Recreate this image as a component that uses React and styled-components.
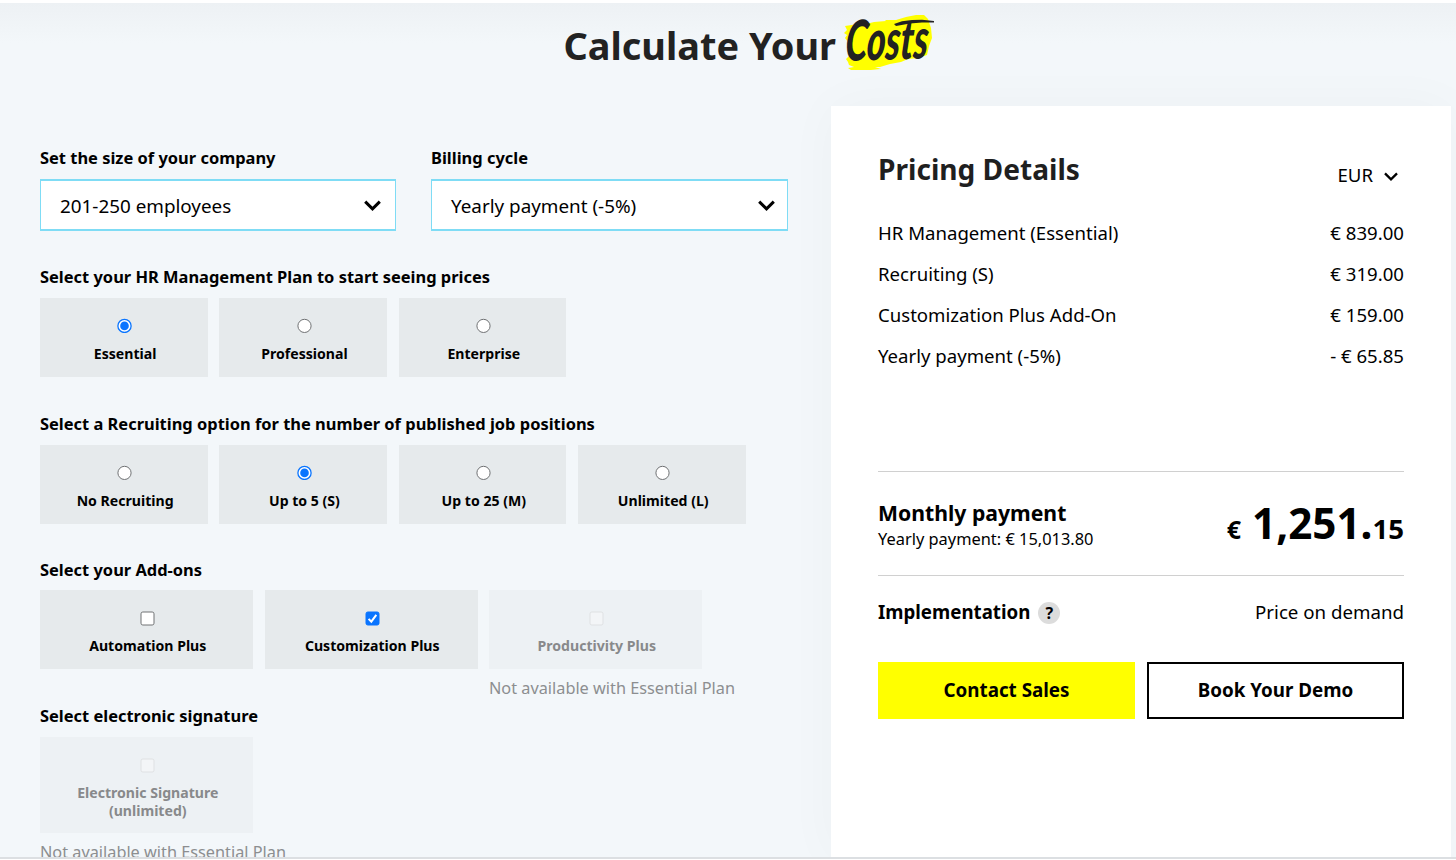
import styled, { createGlobalStyle, css } from 'styled-components';

const GlobalStyle = createGlobalStyle`
  * {
    box-sizing: border-box;
  }

  body {
    margin: 0;
    background: #fff;
    color: #000;
    font-family: 'Noto Sans', 'Open Sans', sans-serif;
  }
`;

const Page = styled.div`
  width: 1456px;
  height: 860px;
  padding-top: 3px;
  overflow: hidden;
  background: #fff;
`;

const Section = styled.main`
  height: 856px;
  overflow: hidden;
  border-bottom: 2px solid #dcdfe2;
  background: linear-gradient(#edf1f4, #f3f7fa 40px);
`;

const Header = styled.header`
  display: flex;
  height: 103px;
  padding: 17px 0 0 563.5px;
`;

const Title = styled.h1`
  margin: 0;
  width: 280.5px;
  color: #222;
  font-size: 37.9px;
  line-height: 50px;
  white-space: nowrap;
`;

const Highlight = styled.span`
  position: relative;
  width: 92px;
  height: 60px;
  margin-top: -8px;

  svg {
    position: absolute;
    inset: 0;
  }
`;

const Script = styled.span`
  position: absolute;
  left: 2px;
  top: 3px;
  color: #222;
  font-family: Lato, sans-serif;
  font-size: 56px;
  font-style: italic;
  font-weight: 900;
  line-height: 50px;
  transform: rotate(-2deg) skewX(-6deg) scaleX(0.64);
  transform-origin: 0 50%;
`;

const Columns = styled.div`
  display: flex;
`;

const Form = styled.div`
  width: 831px;
  height: 752px;
  padding: 40px 43px 0 40px;
`;

const Selects = styled.div`
  display: grid;
  grid-template-columns: 356px 357px;
  gap: 35px;
`;

const Label = styled.div`
  height: 24px;
  font-size: 16.45px;
  font-weight: 700;
  line-height: 24px;
  white-space: nowrap;
`;

const SelectBox = styled.div`
  display: flex;
  align-items: center;
  justify-content: space-between;
  height: 52px;
  margin-top: 9px;
  padding: 1px ${(p) => p.$right || 14}px 0 19px;
  border: solid #7fdcf5;
  border-width: 2px 1px;
  background: #fff;
  font-size: 18.85px;
`;

const Group = styled.section`
  margin-top: ${(p) => p.$top}px;
`;

const Options = styled.div`
  display: grid;
  grid-template-columns: repeat(4, ${(p) => (p.$wide ? 213 : 167.7)}px);
  gap: ${(p) => (p.$wide ? 11.5 : 11.7)}px;
  margin-top: ${(p) => p.$top || 9}px;
`;

const Card = styled.div`
  display: flex;
  flex-direction: column;
  align-items: center;
  height: ${(p) => (p.$tall ? 96 : 79)}px;
  padding-top: 20px;
  background: #e6eaec;
  font-size: 14.1px;
  font-weight: 700;
  line-height: 18px;
  text-align: center;

  > svg {
    margin-left: 2px;
  }

  ${(p) =>
    p.$disabled &&
    css`
      background: #edf1f4;
      color: #88898b;
    `}
`;

const CardText = styled.span`
  margin-top: ${(p) => (p.$tall ? 11 : 12)}px;
  padding-left: 2.5px;
`;

const Note = styled.div`
  margin-top: 7px;
  color: #8c8e90;
  font-size: 16.3px;
  line-height: 24px;
  white-space: nowrap;
`;

const Panel = styled.aside`
  width: 620px;
  height: 752px;
  padding: 44px 47px 0;
  background: #fff;
  box-shadow: 0 0 50px rgba(0, 0, 0, 0.03);
`;

const PanelHead = styled.div`
  display: flex;
  justify-content: space-between;
  height: 63px;
`;

const PanelTitle = styled.h2`
  margin: 0;
  color: #1f1f1f;
  font-size: 28.1px;
  line-height: 38px;
`;

const Currency = styled.div`
  display: flex;
  align-items: center;
  gap: 11px;
  height: 30px;
  margin-top: 10px;
  padding-right: 6px;
  font-size: 18.6px;
  line-height: 28px;

  svg {
    margin-top: 3px;
  }
`;

const Line = styled.div`
  display: flex;
  justify-content: space-between;
  height: 41.1px;
  font-size: 18.6px;
  line-height: 40px;
`;

const Lines = styled.div`
  height: 258px;
`;

const Total = styled.div`
  display: flex;
  justify-content: space-between;
  height: 105px;
  border: solid #d0d0d0;
  border-width: 1px 0;
`;

const TotalTitle = styled.div`
  margin-top: 26px;
  font-size: 21.2px;
  font-weight: 700;
  line-height: 30px;
`;

const TotalSub = styled.div`
  font-size: 16.4px;
  line-height: 22px;
`;

const Amount = styled.div`
  margin-top: 20px;
  font-size: 42.2px;
  font-weight: 700;
  line-height: 62px;

  small {
    font-size: 27.6px;
  }
`;

const CurrencySign = styled.span`
  margin-right: 11px;
  font-size: 25px;
`;

const Implementation = styled.div`
  display: flex;
  align-items: center;
  height: 86px;
  padding-bottom: 16px;
  font-size: 18.7px;

  b {
    margin-right: 8px;
  }

  span:last-child {
    margin-left: auto;
  }
`;

const Help = styled.span`
  width: 22px;
  height: 22px;
  margin-top: 4px;
  border-radius: 50%;
  background: #dcdcdc;
  font-size: 16px;
  font-weight: 700;
  line-height: 22px;
  text-align: center;
`;

const Buttons = styled.div`
  display: grid;
  grid-template-columns: 1fr 1fr;
  gap: 12px;
`;

const Button = styled.button`
  height: 57px;
  padding: 0 0 2px;
  border: 2px solid ${(p) => (p.$primary ? '#ff0' : '#000')};
  background: ${(p) => (p.$primary ? '#ff0' : '#fff')};
  color: #000;
  font-family: inherit;
  font-size: 18.8px;
  font-weight: 700;
`;

const Chevron = ({ size = 17, stroke = 3 }) => (
  <svg width={size} height={size * 0.65} viewBox="0 0 17 11" fill="none">
    <path d="M1.2 1.6 8.5 8.8l7.3-7.2" stroke="#000" strokeWidth={stroke} />
  </svg>
);

const Radio = ({ checked }) => (
  <svg width="15" height="15" viewBox="0 0 15 15">
    <circle cx="7.5" cy="7.9" r="6.6" fill="#fff" stroke={checked ? '#0a75ff' : '#707274'} strokeWidth={checked ? 1.3 : 1} />
    {checked && <circle cx="7.5" cy="7.9" r="4.3" fill="#0a75ff" />}
  </svg>
);

const Checkbox = ({ checked, disabled }) => (
  <svg width="15" height="16" viewBox="0 0 15 16">
    <rect
      x="1"
      y="2"
      width="13"
      height="13"
      rx="1.8"
      fill={checked ? '#0a75ff' : disabled ? '#f3f5f7' : '#fff'}
      stroke={checked ? '#0a75ff' : disabled ? '#dfe1e3' : '#707274'}
    />
    {checked && <path d="M3.6 8.9 6.3 11.7 11.3 4.9" fill="none" stroke="#fff" strokeWidth="2" />}
  </svg>
);

const BrushStroke = () => (
  <svg width="92" height="60" viewBox="0 0 92 60">
    <path
      fill="#ff0"
      d="M1 14 14 12 13 11 22 12 30 10 42 9 41 8 52 8 62 5 72 3 80 3 84 7 87 16 88 26 85 34 83 43 74 46 64 47 57 50 46 52 36 55 31 55 37 57 27 58 7 58 4 56 10 55 5 53 4 50 2 47 5 44 3 36 4 30 1 26 3 23 0 21 3 18Z"
    />
    {/* long sweep across the top of the lettering */}
    <path fill="#222" d="M50 12 58 9.2 68 8 78 7.8 90 9 90 10.4 78 10.6 66 11.4 52 14Z" />
  </svg>
);

const plans = [{ name: 'Essential', checked: true }, { name: 'Professional' }, { name: 'Enterprise' }];

const recruiting = [
  { name: 'No Recruiting' },
  { name: 'Up to 5 (S)', checked: true },
  { name: 'Up to 25 (M)' },
  { name: 'Unlimited (L)' },
];

const addons = [
  { name: 'Automation Plus' },
  { name: 'Customization Plus', checked: true },
  { name: 'Productivity Plus', disabled: true },
];

const prices = [
  ['HR Management (Essential)', '€ 839.00'],
  ['Recruiting (S)', '€ 319.00'],
  ['Customization Plus Add-On', '€ 159.00'],
  ['Yearly payment (-5%)', '- € 65.85'],
];

const RadioOptions = ({ items }) => (
  <Options>
    {items.map((item) => (
      <Card key={item.name}>
        <Radio checked={item.checked} />
        <CardText>{item.name}</CardText>
      </Card>
    ))}
  </Options>
);

const App = () => {
  return (
    <Page>
      <GlobalStyle />
      <Section>
        <Header>
          <Title>Calculate Your</Title>
          <Highlight>
            <BrushStroke />
            <Script>Costs</Script>
          </Highlight>
        </Header>
        <Columns>
          <Form>
            <Selects>
              <div>
                <Label>Set the size of your company</Label>
                <SelectBox>
                  201-250 employees
                  <Chevron />
                </SelectBox>
              </div>
              <div>
                <Label>Billing cycle</Label>
                <SelectBox $right={12}>
                  Yearly payment (-5%)
                  <Chevron />
                </SelectBox>
              </div>
            </Selects>
            <Group $top={34}>
              <Label>Select your HR Management Plan to start seeing prices</Label>
              <RadioOptions items={plans} />
            </Group>
            <Group $top={35}>
              <Label>Select a Recruiting option for the number of published job positions</Label>
              <RadioOptions items={recruiting} />
            </Group>
            <Group $top={34}>
              <Label>Select your Add-ons</Label>
              <Options $wide $top={8}>
                {addons.map((item) => (
                  <div key={item.name}>
                    <Card $disabled={item.disabled}>
                      <Checkbox checked={item.checked} disabled={item.disabled} />
                      <CardText $tall>{item.name}</CardText>
                    </Card>
                    {item.disabled && <Note>Not available with Essential Plan</Note>}
                  </div>
                ))}
              </Options>
            </Group>
            <Group $top={4}>
              <Label>Select electronic signature</Label>
              <Options $wide $top={9}>
                <div>
                  <Card $disabled $tall>
                    <Checkbox disabled />
                    <CardText $tall>
                      Electronic Signature
                      <br />
                      (unlimited)
                    </CardText>
                  </Card>
                  <Note>Not available with Essential Plan</Note>
                </div>
              </Options>
            </Group>
          </Form>
          <Panel>
            <PanelHead>
              <PanelTitle>Pricing Details</PanelTitle>
              <Currency>
                EUR
                <Chevron size={14} stroke={2.8} />
              </Currency>
            </PanelHead>
            <Lines>
              {prices.map(([name, price]) => (
                <Line key={name}>
                  <span>{name}</span>
                  <span>{price}</span>
                </Line>
              ))}
            </Lines>
            <Total>
              <div>
                <TotalTitle>Monthly payment</TotalTitle>
                <TotalSub>Yearly payment: € 15,013.80</TotalSub>
              </div>
              <Amount>
                <CurrencySign>€</CurrencySign>
                1,251.<small>15</small>
              </Amount>
            </Total>
            <Implementation>
              <b>Implementation</b>
              <Help>?</Help>
              <span>Price on demand</span>
            </Implementation>
            <Buttons>
              <Button $primary>Contact Sales</Button>
              <Button>Book Your Demo</Button>
            </Buttons>
          </Panel>
        </Columns>
      </Section>
    </Page>
  );
};

export default App;
